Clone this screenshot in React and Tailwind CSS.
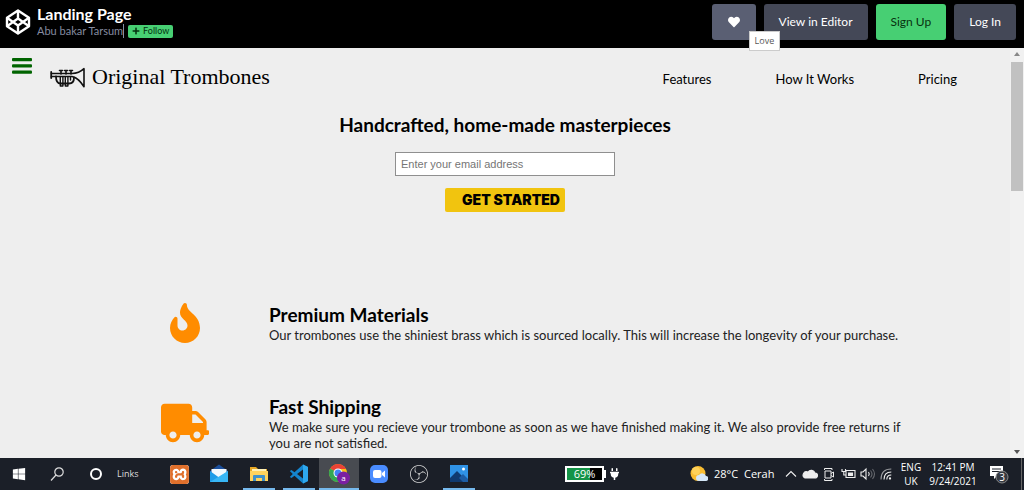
import React from 'react';
import { FaFire, FaTruck, FaHeart, FaPlus, FaPlug, FaWindows } from 'react-icons/fa';
import { SiObsstudio, SiXampp } from 'react-icons/si';

function CodepenMark() {
  return (
    <svg viewBox="0 0 26 26" className="h-[26px] w-[26px]" fill="none" stroke="white" strokeWidth="2.4" strokeLinejoin="round" aria-hidden="true">
      <path d="M13 1.5 24 8.8v8.4L13 24.5 2 17.2V8.8Z" />
      <path d="M2 8.8 13 16.5 24 8.8M2 17.2 13 9.5 24 17.2M13 1.5v8M13 16.5v8" />
    </svg>
  );
}

function MenuMark() {
  return (
    <svg viewBox="0 0 20 18" className="h-[18px] w-5" fill="currentColor" aria-hidden="true">
      <rect y="1" width="20" height="3.2" rx="1" />
      <rect y="7.3" width="20" height="3.2" rx="1" />
      <rect y="13.6" width="20" height="3.2" rx="1" />
    </svg>
  );
}

function TrumpetMark() {
  return (
    <svg viewBox="0 0 36 22" className="h-[22px] w-9" fill="none" stroke="#111" strokeWidth="1.6" strokeLinejoin="round" strokeLinecap="round" aria-hidden="true">
      <path d="M1.2 6v6" strokeWidth="1.8" />
      <path d="M1.5 7.500H22c5 0 8.500-1.500 12-4.800v18C30.500 15.500 27.500 11.500 22 10.500H1.500" />
      <path d="M6 10.500c0 4 1.500 7 4.500 7H19c3.500 0 5-2.500 5-6" strokeWidth="1.800" />
      <path d="M11 5v3M16 5v3M21 5v3M9.500 4.500h3M14.500 4.500h3M19.500 4.500h3" />
      <path d="M10.300 11v9h2.600v-9M15.300 11v9h2.600v-9" strokeWidth="1.400" />
      <path d="M20.500 11v3" strokeWidth="1.400" />
    </svg>
  );
}

function Header() {
  return (
    <header className="flex h-12 shrink-0 items-start justify-between bg-black pl-[5px] pr-2 pt-1">
      <div className="flex gap-[6px]">
        <a href="#home" aria-label="CodePen" className="pt-[5px]"><CodepenMark /></a>
        <div>
          <h1 className="text-[16px] font-bold leading-5 text-white">Landing Page</h1>
          <div className="flex items-center gap-1">
            <a href="#author" className="border-r border-[#868ca0] text-[11px] leading-[14px] text-[#868ca0]">Abu bakar Tarsum</a>
            <button type="button" className="flex h-[13px] items-center gap-[3px] rounded-[2px] bg-[#47cf73] px-1 text-[9px] text-[#04300f]">
              <FaPlus className="h-2 w-2" />Follow
            </button>
          </div>
        </div>
      </div>
      <div className="flex gap-2 text-[12px] text-white">
        <div className="relative">
          <button type="button" aria-label="Love" className="flex h-9 w-11 items-center justify-center rounded-[3px] bg-[#5a5f73]">
            <FaHeart className="h-3 w-3" />
          </button>
          <span role="tooltip" className="absolute left-[37px] top-[27px] z-10 flex h-5 items-center border border-[#ccc] bg-white px-[5px] font-['Open_Sans',sans-serif] text-[9px] text-[#575757]">Love</span>
        </div>
        <button type="button" className="h-9 rounded-[3px] bg-[#444857] px-[15px]">View in Editor</button>
        <button type="button" className="h-9 rounded-[3px] bg-[#47cf73] px-[15px] text-[#07310f]">Sign Up</button>
        <button type="button" className="h-9 rounded-[3px] bg-[#444857] px-[15px]">Log In</button>
      </div>
    </header>
  );
}

const features = [
  { title: 'Premium Materials', text: 'Our trombones use the shiniest brass which is sourced locally. This will increase the longevity of your purchase.', icon: <FaFire className="h-10 w-[30px]" /> },
  { title: 'Fast Shipping', text: 'We make sure you recieve your trombone as soon as we have finished making it. We also provide free returns if you are not satisfied.', icon: <FaTruck className="h-10 w-12" /> },
];

function Landing() {
  return (
    <main className="min-w-0 flex-1 overflow-hidden text-black">
      <nav className="flex items-start justify-between pl-3 pr-[53px] pt-[9px] text-[13px]">
        <div className="flex items-start gap-[18px]">
          <button type="button" aria-label="Menu" className="text-[#006400]"><MenuMark /></button>
          <a href="#top" className="flex items-center gap-[6px] pt-[5px] font-['Liberation_Serif',serif] text-[22px] leading-[30px]">
            <TrumpetMark />Original Trombones
          </a>
        </div>
        <div className="flex gap-16 pt-3 leading-5">
          <a href="#features">Features</a>
          <a href="#how-it-works">How It Works</a>
          <a href="#pricing">Pricing</a>
        </div>
      </nav>
      <form className="flex flex-col items-center pt-[21px]" onSubmit={(e) => e.preventDefault()}>
        <h2 className="text-[19px] font-bold leading-6">Handcrafted, home-made masterpieces</h2>
        <input type="email" aria-label="Email address" placeholder="Enter your email address" className="mt-[15px] h-6 w-[220px] border border-[#8f8f8f] bg-white px-[5px] font-['Liberation_Sans',sans-serif] text-[11px] placeholder:text-[#757575]" />
        <button type="submit" className="mt-3 h-6 w-[120px] rounded-[2px] bg-[#f1c40f] pl-3 font-['Inter',sans-serif] text-[14px] font-black leading-6">GET STARTED</button>
      </form>
      <section id="features" className="mt-[91px] flex flex-col gap-[52px] pl-[125px] pr-[100px]">
        {features.map((f) => (
          <article key={f.title} className="grid grid-cols-[120px_1fr] items-center gap-6">
            <div className="flex justify-center text-[#ff8c00]">{f.icon}</div>
            <div>
              <h2 className="text-[19px] font-bold leading-6">{f.title}</h2>
              <p className="text-[13px] leading-4 text-[#222]">{f.text}</p>
            </div>
          </article>
        ))}
      </section>
    </main>
  );
}

function Scrollbar() {
  return (
    <div className="flex w-[14px] shrink-0 flex-col items-center justify-between bg-[#f1f1f1] py-1" aria-hidden="true">
      <div className="flex flex-col items-center gap-[6px]">
        <svg viewBox="0 0 6 4" className="h-1 w-[6px]"><path d="M0 4 3 0l3 4Z" fill="#888" /></svg>
        <div className="h-[129px] w-3 bg-[#c1c1c1]" />
      </div>
      <svg viewBox="0 0 6 4" className="h-1 w-[6px]"><path d="M0 0h6L3 4Z" fill="#555" /></svg>
    </div>
  );
}

const MailIcon = () => (
  <svg viewBox="0 0 20 20" className="h-5 w-5">
    <path d="M1 7 10 .5 19 7v11H1Z" fill="#1b4f9c" /><path d="M2.5 5h15v8h-15Z" fill="#f2f8fd" />
    <path d="m1 7 9 6.5L19 7v11H1Z" fill="#1e9be8" /><path d="m1 18 18-11v11Z" fill="#38b6f5" />
  </svg>
);
const FolderIcon = () => (
  <svg viewBox="0 0 20 20" className="h-5 w-5">
    <path d="M1 3h6l2 2h9v12H1Z" fill="#e8a824" /><path d="M3 5h14v4H3Z" fill="#fff0b5" /><path d="M1 7h18v10H1Z" fill="#ffd35d" />
    <path d="M4 17v-5q0-1 1-1h10q1 0 1 1v5h-3v-3H7v3Z" fill="#3f91ca" />
  </svg>
);
const CodeIcon = () => (
  <svg viewBox="0 0 20 20" className="h-5 w-5">
    <path d="M14 .5 5.5 8.3 2.5 6 .8 7l3 3-3 3 1.7 1 3-2.3 8.5 7.8L19 17V3Z" fill="#1485cf" />
    <path d="M14 5.5v9L8 10Z" fill="#1c2028" /><path d="M14 .5 19 3v14l-5 2.5Z" fill="#2ea8ee" />
  </svg>
);
const BrowserIcon = () => (
  <svg viewBox="0 0 22 22" className="h-[22px] w-[22px]">
    <circle cx="10" cy="10" r="9" fill="#fbc116" />
    <path d="M10 10 2.2 5.5A9 9 0 0 1 17.8 5.5L18 6H10Z" fill="#ea4335" />
    <path d="M2.2 5.5A9 9 0 0 0 10 19l3.5-7Z" fill="#34a853" />
    <circle cx="10" cy="10" r="4.5" fill="#fff" /><circle cx="10" cy="10" r="3.5" fill="#4285f4" />
    <circle cx="15.5" cy="15" r="6.5" fill="#7b1fa2" />
    <text x="15.5" y="17.5" fontSize="8" textAnchor="middle" fill="#fff" fontFamily="Open Sans">a</text>
  </svg>
);
const MeetingIcon = () => (
  <svg viewBox="0 0 20 20" className="h-5 w-5">
    <rect x="1" y="1" width="18" height="18" rx="5" fill="#4a8cff" /><rect x="4" y="6" width="8.5" height="8" rx="2" fill="#fff" />
    <path d="m13 9 3-2.5v7L13 11Z" fill="#fff" />
  </svg>
);
const PhotosIcon = () => (
  <svg viewBox="0 0 20 20" className="h-5 w-5">
    <path d="M1 1h18v17H1Z" fill="#2f92e6" /><path d="m1 14 7-7 11 11H1Z" fill="#103a70" /><path d="m10 14 4-4 5 5v3h-5Z" fill="#1d5da5" />
    <circle cx="14.5" cy="5" r="1.5" fill="#fff" />
  </svg>
);

const apps = [
  { name: 'XAMPP', icon: <SiXampp className="h-[19px] w-[19px] rounded-[3px] bg-white text-[#e0702c]" />, open: false, active: false },
  { name: 'Mail', icon: <MailIcon />, open: false, active: false },
  { name: 'File Explorer', icon: <FolderIcon />, open: true, active: false },
  { name: 'Visual Studio Code', icon: <CodeIcon />, open: true, active: false },
  { name: 'Chrome', icon: <BrowserIcon />, open: true, active: true },
  { name: 'Zoom', icon: <MeetingIcon />, open: false, active: false },
  { name: 'OBS Studio', icon: <SiObsstudio className="h-[18px] w-[18px] text-[#d5d5d5]" />, open: false, active: false },
  { name: 'Photos', icon: <PhotosIcon />, open: true, active: false },
];

const trayIcons = [
  <path key="up" d="m4 11.5 5-5 5 5" />,
  <path key="cloud" d="M4 13h10a2.500 2.500 0 0 0 0-5 4 4 0 0 0-7-1 3 3 0 0 0-3 6Z" fill="#eee" />,
  <path key="meet" d="M5 6h6v7H5ZM11 8.5l2.5-1.5v5L11 10.5M4.500 5V3.500H12V5M4.500 14v1.500H12V14" strokeWidth="1" />,
  <g key="power"><path d="M7 5.5h9v7H7ZM3 4v2.500h3.500V4M4.800 6.500V10H7" /><path d="M9.500 8h4v2.500h-4Z" fill="#eee" /></g>,
  <g key="sound"><path d="M3 7h2l3-3v10l-3-3H3Z" /><path d="M10.5 7q1.5 2 0 4" /><path d="M12.5 5.5q3 3.5 0 7M14.5 4q4 5 0 10" opacity=".35" /></g>,
  <g key="wifi"><circle cx="13" cy="13.5" r=".6" fill="#eee" /><path d="M9.8 14.5q0-4.500 4.500-4.500M7 14.500Q7 7 14.300 7" /><path d="M4 14.500Q4 4 14.300 4" opacity=".6" /></g>,
];

function Taskbar() {
  return (
    <footer className="flex h-8 shrink-0 items-stretch bg-[#1b1f28] font-['Open_Sans',sans-serif] text-[11px] text-white">
      <button type="button" aria-label="Start" className="flex w-[38px] items-center justify-center"><FaWindows className="h-[14px] w-[14px]" /></button>
      <button type="button" aria-label="Search" className="flex w-[38px] items-center justify-center">
        <svg viewBox="0 0 16 16" className="h-4 w-4" fill="none" stroke="#ddd" strokeWidth="1.2"><circle cx="10" cy="6" r="4.2" /><path d="m7 9-5 5.5" /></svg>
      </button>
      <button type="button" aria-label="Cortana" className="flex w-10 items-center justify-center"><span className="h-3 w-3 rounded-full border-2 border-white" /></button>
      <span className="flex w-[43px] items-center pl-px text-[9px] text-[#ddd]">Links</span>
      {apps.map((a) => (
        <button key={a.name} type="button" aria-label={a.name} className={a.active ? 'flex w-10 flex-col items-center bg-[#484b51]' : 'flex w-10 flex-col items-center'}>
          <span className="flex flex-1 items-center pt-[2px]">{a.icon}</span>
          <span className={a.active ? 'h-[2px] w-full bg-[#76b9ed]' : a.open ? 'h-[2px] w-8 bg-[#76b9ed]' : 'h-[2px] w-8'} />
        </button>
      ))}
      <div className="ml-auto flex items-center">
        <div className="mr-[71px] flex items-center gap-1">
          <div className="flex items-center">
            <span className="flex h-4 w-[39px] items-center justify-center border-2 border-white bg-linear-to-r from-[#159447] from-65% to-black to-65% text-[11px]">69%</span>
            <span className="h-2 w-[2px] bg-white" />
          </div>
          <FaPlug className="h-3 w-[9px]" />
        </div>
        <svg viewBox="0 0 18 18" className="mr-[6px] h-[18px] w-[18px]" aria-hidden="true">
          <circle cx="8" cy="8.5" r="7.5" fill="#f9bd32" /><circle cx="6" cy="6" r="4" fill="#ffd25a" />
          <path d="M9 16a3 3 0 0 1 0-6 4 4 0 0 1 7 1 2.500 2.500 0 0 1-.5 5Z" fill="#d5e7f8" />
        </svg>
        <span className="w-[30px]">28°C</span>
        <span className="w-[38px]">Cerah</span>
        {trayIcons.map((icon) => (
          <svg key={icon.key} viewBox="0 0 18 18" className="mr-px h-[18px] w-[18px]" fill="none" stroke="#eee" strokeWidth="1.1" aria-hidden="true">{icon}</svg>
        ))}
        <span className="ml-px w-7 text-center text-[10px] leading-[14px]">ENG<br />UK</span>
        <span className="w-14 text-center text-[10px] leading-[14px]">12:41 PM<br />9/24/2021</span>
        <div className="ml-1 mr-2 flex h-8 w-7 items-center justify-center">
          <svg viewBox="0 0 22 22" className="h-[22px] w-[22px]" aria-label="3 notifications">
            <path d="M2 3h13v10H9l-3 3v-3H2Z" fill="#fff" /><path d="M4 6h9M4 8.5h9" stroke="#1b1f28" />
            <circle cx="14" cy="14" r="6" fill="#363a42" stroke="#888" />
            <text x="14" y="17.5" fontSize="10" textAnchor="middle" fill="#fff" fontFamily="Open Sans">3</text>
          </svg>
        </div>
        <span className="mr-[2px] h-8 w-px bg-[#666]" />
      </div>
    </footer>
  );
}

export default function App() {
  return (
    <div className="flex h-screen flex-col font-['Lato',sans-serif]">
      <Header />
      <div className="flex min-h-0 flex-1 bg-[#eee]">
        <Landing />
        <Scrollbar />
      </div>
      <Taskbar />
    </div>
  );
}
